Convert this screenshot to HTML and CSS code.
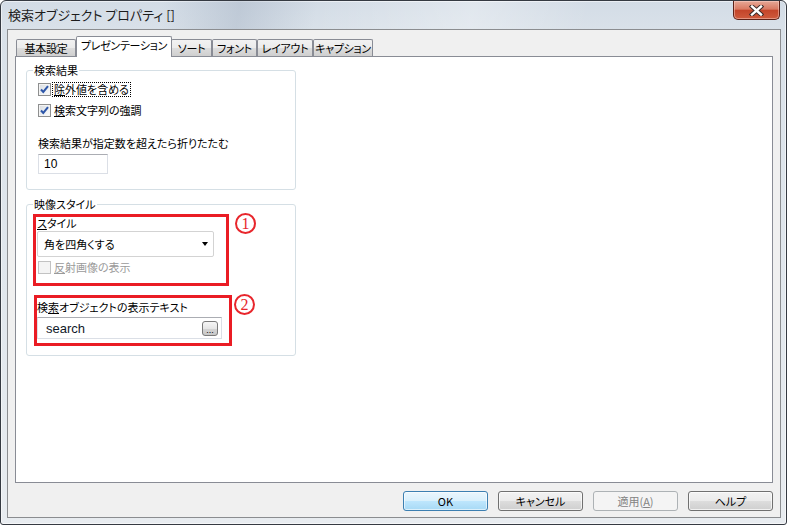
FILE: index.html
```html
<!DOCTYPE html>
<html lang="ja">
<head>
    <meta charset="UTF-8">
    <meta name="viewport" content="width=device-width, initial-scale=1.0">
    <title>検索オブジェクト プロパティ []</title>
    <link rel="stylesheet" href="styles.css">
</head>
<body>
    <div class="window">
        <div class="titlebar">
            <span class="title">検索オブジェクト プロパティ []</span>
            <button class="close-btn" aria-label="閉じる">
                <svg width="15" height="11" viewBox="0 0 15 11">
                    <path d="M3 1.5 L12 9.5 M12 1.5 L3 9.5" stroke="#3a2a28" stroke-width="4.4" stroke-linecap="square"/>
                    <path d="M3 1.5 L12 9.5 M12 1.5 L3 9.5" stroke="#ffffff" stroke-width="2.4" stroke-linecap="square"/>
                </svg>
            </button>
        </div>
        <div class="client">
            <div class="tabs">
                <div class="tab t-basic">基本設定</div>
                <div class="tab active t-pres">プレゼンテーション</div>
                <div class="tab t-sort">ソート</div>
                <div class="tab t-font">フォント</div>
                <div class="tab t-layout">レイアウト</div>
                <div class="tab t-caption">キャプション</div>
            </div>
            <div class="panel">
                <fieldset class="group group-results">
                    <legend>検索結果</legend>
                    <div class="group-body results-body">
                        <div class="check-row">
                            <span class="checkbox checked">
                                <svg width="11" height="11" viewBox="0 0 11 11"><path d="M2 5.5 L4.3 8 L9 2.2" fill="none" stroke="#2d56a8" stroke-width="2"/></svg>
                            </span>
                            <span class="focus-label"><u>除</u>外値を含める</span>
                        </div>
                        <div class="check-row">
                            <span class="checkbox checked">
                                <svg width="11" height="11" viewBox="0 0 11 11"><path d="M2 5.5 L4.3 8 L9 2.2" fill="none" stroke="#2d56a8" stroke-width="2"/></svg>
                            </span>
                            <span><u>検</u>索文字列の強調</span>
                        </div>
                        <div class="field-label collapse-label">検索結果が指定数を超えたら折りたたむ</div>
                        <div class="textbox num-box">10</div>
                    </div>
                </fieldset>

                <fieldset class="group group-style">
                    <legend>映像スタイル</legend>
                    <div class="group-body style-body">
                        <div class="annot">
                            <div class="red-box box-one">
                                <div class="field-label"><u>ス</u>タイル</div>
                                <div class="select">
                                    <span>角を四角くする</span>
                                    <span class="arrow"></span>
                                </div>
                                <div class="check-row disabled">
                                    <span class="checkbox"></span>
                                    <span><u>反</u>射画像の表示</span>
                                </div>
                            </div>
                            <span class="num num-one">1</span>
                        </div>
                        <div class="annot">
                            <div class="red-box box-two">
                                <div class="field-label label-two">検<u>索</u>オブジェクトの表示テキスト</div>
                                <div class="textbox text-box">
                                    <span class="text-value">search</span>
                                    <span class="dots-btn">...</span>
                                </div>
                            </div>
                            <span class="num num-two">2</span>
                        </div>
                    </div>
                </fieldset>
            </div>
            <div class="buttons">
                <button class="btn default">OK</button>
                <button class="btn">キャンセル</button>
                <button class="btn" disabled>適用(<u>A</u>)</button>
                <button class="btn">ヘルプ</button>
            </div>
        </div>
    </div>
</body>
</html>
```

FILE: styles.css
```css
* {
    box-sizing: border-box;
}
body {
    margin: 0;
    background: #ffffff;
    font-family: "Noto Sans CJK JP", "Noto Sans", sans-serif;
    font-size: 11px;
    line-height: 13px;
    color: #000000;
    font-feature-settings: "palt";
}
u {
    text-underline-offset: 1px;
}

/* Window frame */
.window {
    width: 787px;
    height: 525px;
    display: flex;
    flex-direction: column;
    padding: 0 5px 6px 6px;
    border: 1px solid #353a42;
    border-radius: 6px 6px 3px 3px;
    background: linear-gradient(to bottom, #d3dce6 0, #d9e1e9 28px, #e8ecf0 100%);
    box-shadow: inset 0 0 0 1px rgba(255, 255, 255, 0.55);
}
.titlebar {
    height: 28px;
    display: flex;
    justify-content: space-between;
    align-items: flex-start;
    background: linear-gradient(100deg, rgba(255,255,255,0) 20%, rgba(150,165,185,0.35) 30%, rgba(255,255,255,0) 40%, rgba(255,255,255,0.3) 60%, rgba(255,255,255,0) 75%);
}
.title {
    padding: 6px 0 0 1px;
    font-size: 13px;
    line-height: 15px;
    color: #1c1c1c;
}
.close-btn {
    width: 47px;
    height: 19px;
    margin-right: 1px;
    padding: 0;
    display: flex;
    align-items: center;
    justify-content: center;
    border: 1px solid #5e2218;
    border-top: none;
    border-radius: 0 0 5px 5px;
    background: linear-gradient(to bottom, #e6a897 0, #d97a63 45%, #c4452a 52%, #cf5b3d 100%);
    box-shadow: inset 0 0 0 1px rgba(255, 220, 210, 0.45);
}

/* Client area */
.client {
    flex: 1;
    display: flex;
    flex-direction: column;
    padding: 6px 7px 6px 7px;
    border: 1px solid #8b8d90;
    background: #f0f0f0;
}
.tabs {
    height: 20px;
    display: flex;
    align-items: flex-end;
    padding-left: 1px;
}
.tab {
    height: 17px;
    display: flex;
    align-items: center;
    justify-content: center;
    padding-top: 1px;
    white-space: nowrap;
    letter-spacing: -0.3px;
    border: 1px solid #898c95;
    border-bottom: none;
    border-radius: 2px 2px 0 0;
    background: linear-gradient(to bottom, #f2f2f2 0, #ebebeb 50%, #dddddd 51%, #cfcfcf 100%);
}
.tab.active {
    height: 21px;
    margin-bottom: -1px;
    padding-top: 0;
    padding-bottom: 4px;
    background: #ffffff;
    position: relative;
    z-index: 1;
}
.t-basic { width: 60px; }
.t-pres { width: 96px; }
.t-sort { width: 41px; margin-left: -1px; }
.t-font { width: 45px; }
.t-layout { width: 56px; }
.t-caption { width: 60px; }

.panel {
    flex: 1;
    padding-left: 10px;
    border: 1px solid #898c95;
    background: #ffffff;
}

/* Group boxes */
.group {
    width: 270px;
    margin: 0;
    padding: 0;
    min-width: 0;
    border: 1px solid #d5dfe5;
    border-radius: 3px;
}
.group legend {
    margin-left: 6px;
    padding: 0 1px;
    line-height: 13px;
}
.group-results {
    margin-top: 7px;
}
.group-style {
    margin-top: 8px;
}
.results-body {
    padding: 2px 0 15px 11px;
}
.style-body {
    padding: 3px 0 9px 6px;
}

.check-row {
    height: 21px;
    display: flex;
    align-items: center;
    gap: 3px;
}
.checkbox {
    width: 13px;
    height: 13px;
    display: flex;
    align-items: center;
    justify-content: center;
    border: 1px solid #8e8f8f;
    background: linear-gradient(135deg, #d8dce0 0, #eef0f2 60%, #fbfbfb 100%);
    box-shadow: inset 0 0 0 1px #f4f4f4;
}
.focus-label {
    outline: 1px dotted #000000;
    outline-offset: 0;
    padding: 0 1px;
    margin-left: -1px;
}
.field-label {
    line-height: 13px;
}
.collapse-label {
    margin-top: 16px;
}
.textbox {
    border: 1px solid #dbdfe6;
    border-top-color: #abadb3;
    background: #ffffff;
}
.num-box {
    width: 70px;
    height: 20px;
    margin-top: 4px;
    padding: 3px 0 0 5px;
    font-family: "Liberation Sans", Arial, sans-serif;
    font-size: 12px;
}

/* Annotated boxes */
.annot {
    display: flex;
    align-items: flex-start;
}
.red-box {
    border: 3px solid #ea1c24;
}
.box-one {
    width: 196px;
    padding: 0 0 7px 1px;
}
.box-two {
    width: 198px;
    margin-top: 9px;
    margin-left: 1px;
    padding: 3px 0 4px 0;
}
.num {
    width: 21px;
    height: 21px;
    margin-top: -1px;
    display: flex;
    align-items: center;
    justify-content: center;
    border: 2px solid #e8262c;
    border-radius: 50%;
    color: #e8262c;
    font-family: "Liberation Serif", "Times New Roman", serif;
    font-size: 16px;
    line-height: 16px;
}
.num-one {
    margin-left: 6px;
}
.num-two {
    margin-left: 2px;
    margin-top: 8px;
}

.select {
    width: 177px;
    height: 26px;
    margin: 1px 0 0 0;
    padding: 0 5px 0 6px;
    display: flex;
    align-items: center;
    justify-content: space-between;
    border: 1px solid #d3d3d3;
    border-radius: 2px;
    background: #ffffff;
}
.arrow {
    width: 0;
    height: 0;
    border-left: 3.5px solid transparent;
    border-right: 3.5px solid transparent;
    border-top: 4px solid #000000;
}
.check-row.disabled {
    height: 17px;
    margin-top: 2px;
    padding-left: 1px;
    color: #9a9a9a;
}
.check-row.disabled .checkbox {
    border-color: #c2c2c2;
    background: #f4f4f4;
    box-shadow: none;
}
.label-two {
    margin-top: 0;
}
.text-box {
    width: 185px;
    height: 22px;
    margin-top: 3px;
    padding: 0 3px 0 8px;
    display: flex;
    align-items: center;
    justify-content: space-between;
}
.text-value {
    font-family: "Liberation Sans", Arial, sans-serif;
    font-size: 13px;
    color: #101828;
}
.dots-btn {
    width: 16px;
    height: 15px;
    display: flex;
    align-items: flex-end;
    justify-content: center;
    padding-bottom: 2px;
    border: 1px solid #7a7a7a;
    border-radius: 3px;
    background: linear-gradient(to bottom, #f6f6f6 0, #e6e6e6 50%, #d4d4d4 51%, #c8c8c8 100%);
    font-family: "Liberation Sans", Arial, sans-serif;
    font-size: 9px;
    line-height: 6px;
}

/* Dialog buttons */
.buttons {
    display: flex;
    justify-content: flex-end;
    gap: 10px;
    margin-top: 8px;
    padding-right: 0;
}
.btn {
    width: 85px;
    height: 20px;
    padding: 0;
    border: 1px solid #707070;
    border-radius: 3px;
    background: linear-gradient(to bottom, #f2f2f2 0, #ebebeb 50%, #dddddd 51%, #cfcfcf 100%);
    box-shadow: inset 0 0 0 1px rgba(255, 255, 255, 0.7);
    font-family: inherit;
    font-size: 11px;
    line-height: 13px;
    color: #000000;
    font-feature-settings: "palt";
}
.btn.default {
    border-color: #3c7fb1;
    background: linear-gradient(to bottom, #eaf6fd 0, #d9f0fc 50%, #bee6fd 51%, #a7d9f5 100%);
    box-shadow: inset 0 0 0 1px rgba(255, 255, 255, 0.6);
}
.btn:disabled {
    border-color: #adb2b5;
    background: #f4f4f4;
    box-shadow: none;
    color: #838383;
}
```
